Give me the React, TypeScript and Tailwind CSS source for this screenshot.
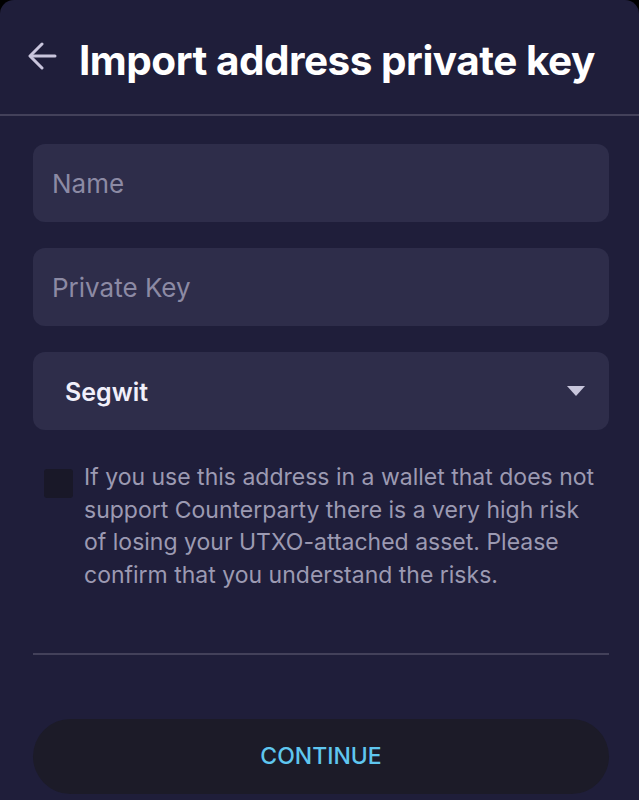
import React, { useState } from 'react';

const BackArrow = () => (
  <svg width="30" height="28" viewBox="0 0 30 28" fill="none" stroke="#c9c5dc" strokeWidth="3" strokeLinecap="round" strokeLinejoin="round">
    <path d="M27 14H3" />
    <path d="M14 2L2 14l12 12" />
  </svg>
);

const Field = ({ placeholder }: { placeholder: string }) => (
  <input
    type="text"
    placeholder={placeholder}
    className="w-full h-[78px] rounded-[12px] bg-[#2e2d4a] px-[19px] text-[26px] text-white placeholder:text-[#8c8aa4] outline-none"
  />
);

const App = () => {
  const [checked, setChecked] = useState<boolean>(false);

  return (
    <div className="min-h-screen bg-black font-['Inter','Noto_Sans',sans-serif]">
      <div className="min-h-[800px] rounded-t-[14px] bg-[#1f1e3a]">
        {/* header */}
        <div className="flex h-[116px] items-center gap-[21px] border-b-2 border-[#43415a] pl-[28px] pb-[2px]">
          <BackArrow />
          <h1 className="mt-[10px] text-[40.5px] font-bold tracking-[-0.5px] text-white">Import address private key</h1>
        </div>

        <div className="pl-[33px] pr-[30px] pt-[28px]">
          <div className="flex flex-col gap-[26px]">
            <Field placeholder="Name" />
            <Field placeholder="Private Key" />
            <div className="flex h-[78px] items-center justify-between rounded-[12px] bg-[#2e2d4a] pl-[32px] pr-[24px]">
              <span className="mt-[4px] text-[25px] font-semibold text-[#f1effa]">Segwit</span>
              <svg width="18" height="10" viewBox="0 0 18 10">
                <path d="M0 0h18L9 10z" fill="#c8c6dc" />
              </svg>
            </div>
          </div>

          {/* risk checkbox */}
          <div className="mt-[37px] flex items-start gap-[11px] pl-[11px] pr-[9px]">
            <button
              onClick={() => setChecked(!checked)}
              className="mt-[2px] h-[29px] w-[29px] shrink-0 rounded-[3px] bg-[#191828]"
            >
              {checked && <span className="block text-center text-[18px] text-white">✓</span>}
            </button>
            <p className="-mt-[6px] text-[23px] leading-[32.5px] text-[#9c9ab2]">
              If you use this address in a wallet that does not support Counterparty there is a very high risk of losing your UTXO-attached asset. Please confirm that you understand the risks.
            </p>
          </div>

          <div className="mt-[62px] border-t-2 border-[#43415a]"></div>

          <button className="mt-[64px] flex h-[75px] w-full items-center justify-center rounded-full bg-[#1c1b28] text-[23px] font-medium text-[#5fc6ef]">
            CONTINUE
          </button>
        </div>
      </div>
    </div>
  );
};

export default App;
